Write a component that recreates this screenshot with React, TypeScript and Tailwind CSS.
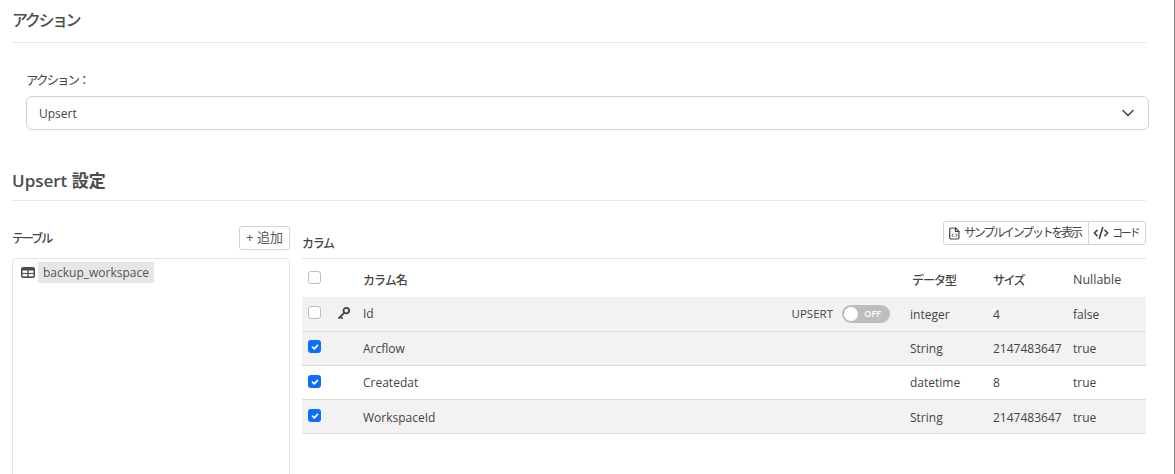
import React from 'react';
import { ChevronDown, CodeXml } from 'lucide-react';

const font = 'font-["Open_Sans","Noto_Sans_CJK_JP",sans-serif]';

type Column = { name: string; type: string; size: string; nullable: string; checked: boolean; striped: boolean; h: string; check: string; text: string; primary?: boolean };

const columns: Column[] = [
  { name: 'Id', type: 'integer', size: '4', nullable: 'false', checked: false, striped: true, primary: true, h: 'h-[35px]', check: '-mt-[3px]', text: 'pt-[1px]' },
  { name: 'Arcflow', type: 'String', size: '2147483647', nullable: 'true', checked: true, striped: true, h: 'h-[34px]', check: '-mt-[4px]', text: '' },
  { name: 'Createdat', type: 'datetime', size: '8', nullable: 'true', checked: true, striped: false, h: 'h-[34px]', check: '-mt-[2px]', text: '' },
  { name: 'WorkspaceId', type: 'String', size: '2147483647', nullable: 'true', checked: true, striped: true, h: 'h-[34px]', check: '-mt-[2px]', text: 'pt-[2px]' },
];

const rowGrid = 'grid grid-cols-[35px_26px_547px_83px_80px_73px] items-center';

const Check: React.FC<{ checked: boolean }> = ({ checked }) =>
  checked ? (
    <span className="flex h-[13px] w-[13px] items-center justify-center rounded-[3px] bg-[#0d6efd]">
      <svg viewBox="0 0 12 12" className="h-[10px] w-[10px]" fill="none" stroke="white" strokeWidth="2" strokeLinecap="round" strokeLinejoin="round">
        <path d="M3 6.2l2.1 2L9 4" />
      </svg>
    </span>
  ) : (
    <span className="block h-[13px] w-[13px] rounded-[3px] border border-[#bdbdbd] bg-white" />
  );

const App: React.FC = () => {
  return (
    <div className={`${font} h-[474px] w-[1175px] overflow-hidden border-r border-[#8a8a8a] bg-white pl-3 pr-[28px] text-[12px] text-[#444]`}>
      <h2 className="flex h-[43px] items-center border-b border-[#e8e8e8] pb-[2px] text-[16px] font-medium tracking-[-2.4px] text-[#4d4d4d]">アクション</h2>

      <div className="pl-[14px] pt-[27px]">
        <label className="block h-[26px] pt-[2px] text-[12.5px] leading-[18px] tracking-[-2px] text-[#444]">アクション：</label>
        <div className="flex h-[34px] w-[1123px] items-center justify-between rounded-[6px] border border-[#d0d0d0] pl-3 pr-[10px]">
          <span className="pt-[1px]">Upsert</span>
          <ChevronDown className="h-[20px] w-[20px] text-[#444]" strokeWidth={1.8} />
        </div>
      </div>

      <h2 className="mt-[33px] flex h-[38px] items-center border-b border-[#e8e8e8] pb-[2px] text-[17px] font-semibold text-[#4d4d4d]">Upsert 設定</h2>

      <div className="mt-[20px] flex gap-3">
        <div className="w-[278px] shrink-0">
          <div className="flex h-[37px] items-start justify-between pt-[5px]">
            <span className="pt-[4px] text-[12px] font-medium tracking-[-2px] text-[#444]">テーブル</span>
            <button className="flex h-[24px] w-[51px] items-center justify-center rounded-[3px] border border-[#d4d4d4] text-[13px] text-[#555]">+ 追加</button>
          </div>
          <div className="h-[260px] rounded-t-[4px] border border-[#e4e4e4] pl-2 pt-[3px]">
            <div className="flex items-center gap-[3px]">
              <svg viewBox="0 0 14 12" className="h-[12px] w-[14px]">
                <rect x="0" y="0" width="14" height="11" rx="2" fill="#4a4a4a" />
                <rect x="1.5" y="3.5" width="4.8" height="2.4" fill="white" />
                <rect x="7.7" y="3.5" width="4.8" height="2.4" fill="white" />
                <rect x="1.5" y="7" width="4.8" height="2.4" fill="white" />
                <rect x="7.7" y="7" width="4.8" height="2.4" fill="white" />
              </svg>
              <span className="flex h-[21px] items-center bg-[#e6e6e6] px-[5px] pt-[1px] text-[#555]">backup_workspace</span>
            </div>
          </div>
        </div>

        <div className="min-w-0 flex-1">
          <div className="flex h-[38px] items-start justify-between border-b border-[#e4e4e4]">
            <span className="pt-[14px] text-[12px] font-medium tracking-[-1.3px] text-[#444]">カラム</span>
            <div className="flex h-[24px] w-[203px] rounded-[3px] border border-[#d4d4d4] text-[12px] text-[#444]">
              <span className="flex w-[145px] shrink-0 items-center gap-[4px] border-r border-[#d4d4d4] pl-[5px] tracking-[-2.2px]">
                <svg viewBox="0 0 12 14" className="h-[13px] w-[11px] shrink-0" fill="none" stroke="#444" strokeWidth="1.3" strokeLinecap="round" strokeLinejoin="round">
                  <path d="M2.2 1h5l3.6 3.6v7a1.4 1.4 0 0 1-1.4 1.4H2.2A1.4 1.4 0 0 1 .8 11.6V2.4A1.4 1.4 0 0 1 2.2 1z" />
                  <path d="M7 1v3.8h3.8" />
                  <path d="M4.6 7.4L3.2 9l1.4 1.6M7.4 7.4L8.8 9l-1.4 1.6" strokeWidth="1" />
                </svg>
                サンプルインプットを表示
              </span>
              <span className="flex min-w-0 flex-1 items-center gap-[3px] pl-[4px] text-[11px] tracking-[-2.2px]">
                <CodeXml className="h-[16px] w-[16px] shrink-0" strokeWidth={2.5} />
                コード
              </span>
            </div>
          </div>

          <div className={`${rowGrid} h-[38px] font-medium text-[#444]`}>
            <span className="-mt-[2px] pl-[6px]"><Check checked={false} /></span>
            <span />
            <span className="pt-[5px] tracking-[-1px]">カラム名</span>
            <span className="pl-[2px] pt-[5px] tracking-[-1px]">データ型</span>
            <span className="pt-[5px] tracking-[-1.6px]">サイズ</span>
            <span className="pt-[5px] text-[12.5px]">Nullable</span>
          </div>

          {columns.map((c) => (
            <div key={c.name} className={`${rowGrid} ${c.h} border-b border-[#dcdcdc] ${c.striped ? 'bg-[#f2f2f2]' : 'bg-white'}`}>
              <span className={`${c.check} pl-[6px]`}><Check checked={c.checked} /></span>
              <span className="-mt-[3px]">
                {c.primary && (
                  <svg viewBox="0 0 14 14" className="h-[14px] w-[14px]" fill="none" stroke="#444" strokeWidth="1.8" strokeLinecap="round" strokeLinejoin="round">
                    <circle cx="9.3" cy="4.6" r="2.8" />
                    <path d="M7.2 6.8L2 12M3.4 10.5L5 12.2" />
                  </svg>
                )}
              </span>
              <span className={`flex items-center justify-between pr-[20px] ${c.primary ? '' : c.text}`}>
                <span>{c.name}</span>
                {c.primary && (
                  <span className="flex items-center gap-[9px]">
                    <span className="text-[11.5px]">UPSERT</span>
                    <span className="relative flex h-[18px] w-[48px] items-center justify-end rounded-full bg-[#bdbdbd] pr-[9px] text-[9px] font-semibold text-white">
                      OFF
                      <span className="absolute left-[2px] top-[2px] h-[14px] w-[14px] rounded-full bg-white" />
                    </span>
                  </span>
                )}
              </span>
              <span className={c.text}>{c.type}</span>
              <span className={c.text}>{c.size}</span>
              <span className={c.text}>{c.nullable}</span>
            </div>
          ))}
        </div>
      </div>
    </div>
  );
};

export default App;
